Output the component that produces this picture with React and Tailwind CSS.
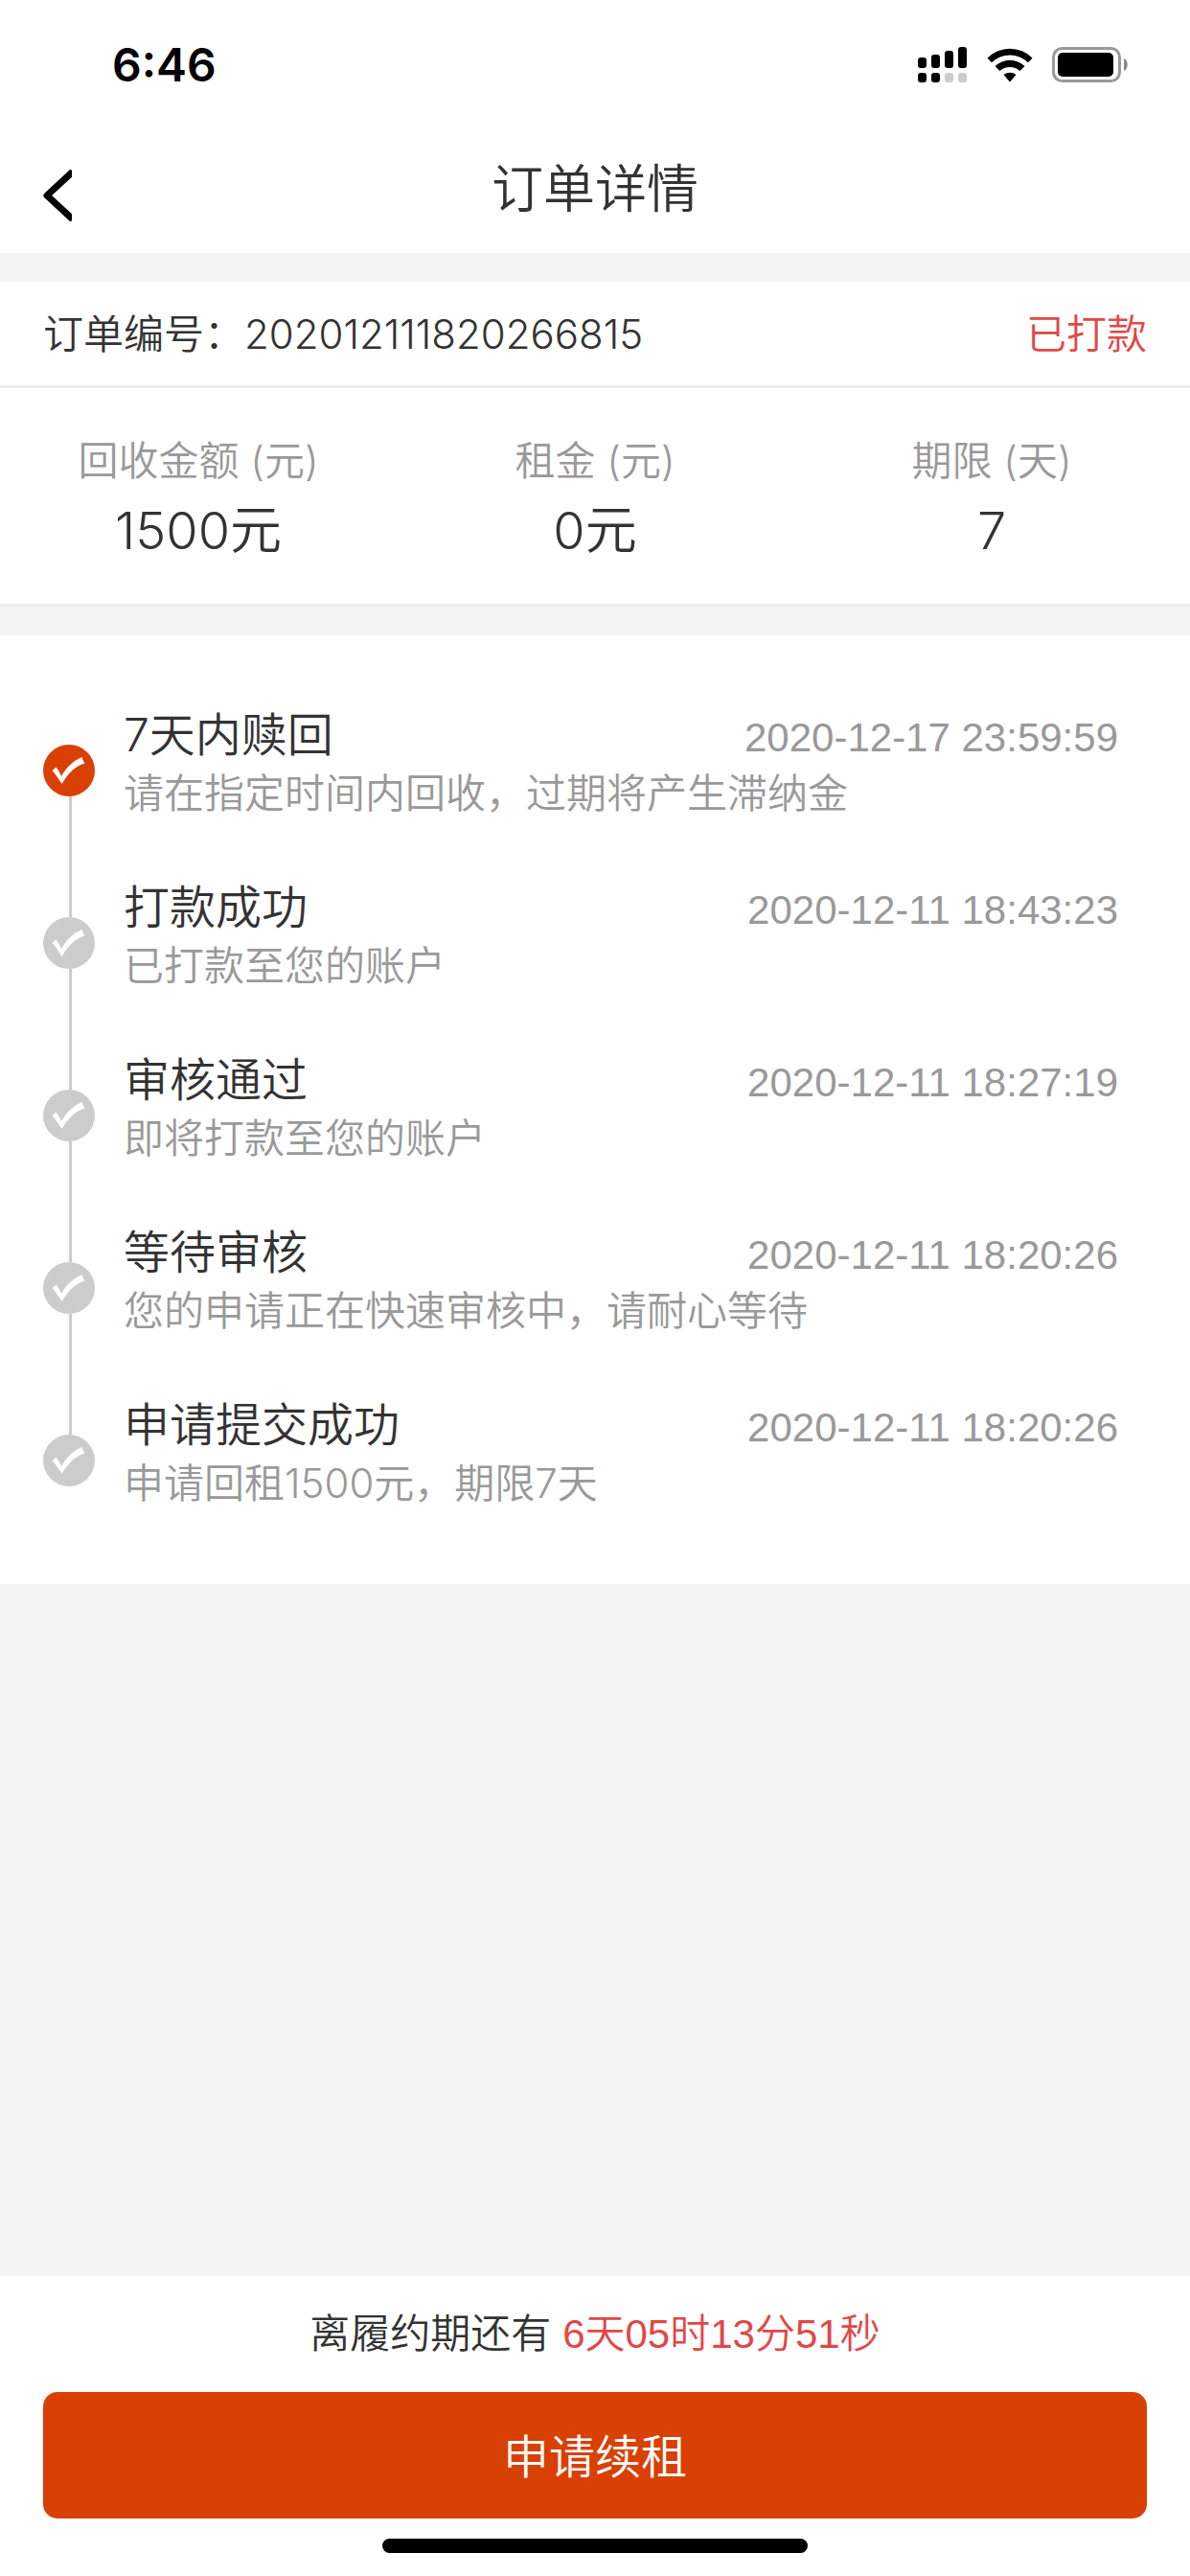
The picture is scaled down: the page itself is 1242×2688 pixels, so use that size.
const summary = [
  { label: "回收金额 (元)", value: "1500元" },
  { label: "租金 (元)", value: "0元" },
  { label: "期限 (天)", value: "7" },
];

const steps = [
  { title: "7天内赎回", desc: "请在指定时间内回收，过期将产生滞纳金", time: "2020-12-17 23:59:59", active: true },
  { title: "打款成功", desc: "已打款至您的账户", time: "2020-12-11 18:43:23" },
  { title: "审核通过", desc: "即将打款至您的账户", time: "2020-12-11 18:27:19" },
  { title: "等待审核", desc: "您的申请正在快速审核中，请耐心等待", time: "2020-12-11 18:20:26" },
  { title: "申请提交成功", desc: "申请回租1500元，期限7天", time: "2020-12-11 18:20:26" },
];

function StatusBar() {
  return (
    <div className="flex h-[132px] items-center justify-between pl-[117px] pr-[64px] pt-[3px] text-black">
      <span className="text-[48px] font-semibold leading-[60px]">6:46</span>
      <div className="flex items-center">
        <svg className="mr-[21px] h-[38px] w-[51px]" viewBox="0 0 51 38">
          <rect x="0" y="11" width="9" height="11" rx="3" />
          <rect x="14" y="8" width="9" height="14" rx="3" />
          <rect x="28" y="4" width="9" height="18" rx="3" />
          <rect x="42" y="0" width="9" height="22" rx="3" />
          <rect x="0" y="27" width="9" height="10" rx="3" />
          <rect x="14" y="27" width="9" height="10" rx="3" />
          <rect x="28" y="27" width="9" height="10" rx="3" fill="#ccc" />
          <rect x="42" y="27" width="9" height="10" rx="3" fill="#ccc" />
        </svg>
        <svg className="mr-[20px] h-[38px] w-[48px]" viewBox="0 0 48 38">
          <path d="M0.5 11.5a33.500 33.500 0 0 1 47 0l-4.500 4.700a27 27 0 0 0-38 0z" />
          <path d="M8.500 20a22.500 22.500 0 0 1 31 0l-5 5a15.500 15.500 0 0 0-21 0z" />
          <path d="M17.500 29a10.500 10.500 0 0 1 13 0l-6.500 7.500z" />
        </svg>
        <svg className="h-[38px] w-[80px]" viewBox="0 0 80 38">
          <rect x="1.500" y="1.500" width="69" height="34" rx="9" fill="none" stroke="#999" strokeWidth="3" />
          <rect x="6" y="6" width="58" height="25" rx="5" />
          <path d="M75 12c5 2 5 11 0 13z" fill="#888" />
        </svg>
      </div>
    </div>
  );
}

function StepItem({ step, first, last }) {
  return (
    <li className="flex h-[180px]">
      <div className="flex w-[54px] shrink-0 flex-col">
        <div className={`ml-[27px] h-[45px] w-[3px] ${first ? "" : "bg-[#ccc]"}`} />
        <svg className={`size-[54px] ${step.active ? "text-[#d94003]" : "text-[#ccc]"}`} viewBox="0 0 54 54">
          <circle cx="27" cy="27" r="27" fill="currentColor" />
          <path d="M9.500 27l4-3.500c2.500 3 4 6 5.500 9.500 5-9 12-16 21.500-20l1 3 2 3.500c-10 3-17 10-24 21.500-3-5-6-9-10-14z" fill="#fff" />
        </svg>
        <div className={`ml-[27px] w-[3px] flex-1 ${last ? "" : "bg-[#ccc]"}`} />
      </div>
      <div className="ml-[30px] flex-1">
        <div className="flex h-[69px] items-baseline justify-between">
          <h2 className="text-[48px] leading-[69px]">{step.title}</h2>
          <time className="font-['Liberation_Sans',sans-serif] text-[42px] leading-[60px] text-[#999]">{step.time}</time>
        </div>
        <p className="text-[42px] leading-[54px] text-[#999]">{step.desc}</p>
      </div>
    </li>
  );
}

export default function App() {
  return (
    <div className="flex min-h-screen flex-col bg-[#f4f4f4] font-['Inter','Noto_Sans_CJK_SC',sans-serif] font-[350] text-[#333]">
      <header className="bg-white">
        <StatusBar />
        <div className="grid h-[132px] grid-cols-[1fr_auto_1fr] items-center px-[45px]">
          <button type="button" aria-label="返回" className="justify-self-start pt-3">
            <svg className="h-[54px] w-[30px]" viewBox="0 0 30 54">
              <path d="M31 2L4 27l27 25" fill="none" stroke="#000" strokeWidth="7" strokeLinejoin="round" />
            </svg>
          </button>
          <h1 className="text-[54px] leading-[78px]">订单详情</h1>
        </div>
      </header>

      <section className="mt-[30px] bg-white">
        <div className="flex h-[111px] items-center justify-between border-b-[3px] border-[#ececec] px-[45px] text-[42px]">
          <p>订单编号：202012111820266815</p>
          <span className="text-[#e04848]">已打款</span>
        </div>
        <dl className="grid h-[228px] grid-cols-3 content-center border-b-[3px] border-[#ececec] pt-[6px] text-center">
          {summary.map((item) => (
            <div key={item.label}>
              <dt className="text-[42px] leading-[66px] text-[#999]">{item.label}</dt>
              <dd className="text-[54px] leading-[80px]">{item.value}</dd>
            </div>
          ))}
        </dl>
      </section>

      <ul className="mt-[30px] bg-white pb-[21px] pl-[45px] pr-[75px] pt-[69px]">
        {steps.map((step, index) => (
          <StepItem key={step.title} step={step} first={index === 0} last={index === steps.length - 1} />
        ))}
      </ul>

      <footer className="mt-auto bg-white px-[45px] pb-[24px]">
        <p className="text-center text-[42px] leading-[120px]">
          离履约期还有{" "}
          <span className="font-['Liberation_Sans','Noto_Sans_CJK_SC',sans-serif] text-[#e04848]">6天05时13分51秒</span>
        </p>
        <button type="button" className="block h-[132px] w-full rounded-[15px] bg-[#d94003] pt-[3px] text-[48px] text-white">
          申请续租
        </button>
        <div className="mx-auto mt-[21px] h-[15px] w-[444px] rounded-full bg-black" />
      </footer>
    </div>
  );
}
